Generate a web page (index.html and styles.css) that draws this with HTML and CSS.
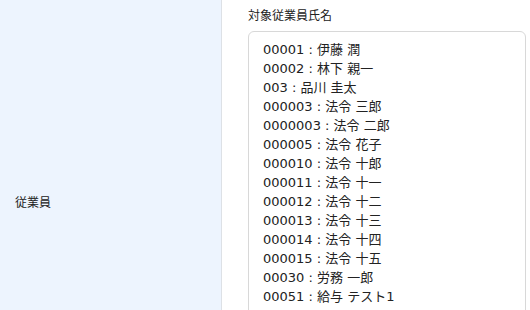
FILE: index.html
```html
<!DOCTYPE html>
<html lang="ja">
<head>
  <meta charset="UTF-8" />
  <title>従業員</title>
  <link rel="stylesheet" href="styles.css">
</head>
<body>
  <div class="form-row">
    <div class="row-head">従業員</div>
    <div class="row-body">
      <div class="field-label">対象従業員氏名</div>
      <ul class="emp-list">
        <li>00001 : 伊藤 潤</li>
        <li>00002 : 林下 親一</li>
        <li>003 : 品川 圭太</li>
        <li>000003 : 法令 三郎</li>
        <li>0000003 : 法令 二郎</li>
        <li>000005 : 法令 花子</li>
        <li>000010 : 法令 十郎</li>
        <li>000011 : 法令 十一</li>
        <li>000012 : 法令 十二</li>
        <li>000013 : 法令 十三</li>
        <li>000014 : 法令 十四</li>
        <li>000015 : 法令 十五</li>
        <li>00030 : 労務 一郎</li>
        <li>00051 : 給与 テスト1</li>
      </ul>
    </div>
  </div>
</body>
</html>
```

FILE: styles.css
```css
* {
  box-sizing: border-box;
  margin: 0;
  padding: 0;
}
html, body {
  height: 100%;
  overflow: hidden;
}
body {
  font-family: "DejaVu Sans", "Noto Sans CJK JP", sans-serif;
  font-size: 13px;
  color: #222;
  background: #fff;
}
.form-row {
  display: flex;
  height: 402px;
}
.row-head {
  width: 222px;
  flex-shrink: 0;
  background: #edf4fe;
  border-right: 1px solid #dde1e6;
  padding-left: 15px;
  display: flex;
  align-items: center;
  font-size: 12px;
}
.row-body {
  flex: 1;
  padding: 8px 4px 0 26px;
}
.field-label {
  font-size: 12px;
  line-height: 17px;
  margin-bottom: 6px;
}
.emp-list {
  list-style: none;
  border: 1px solid #d8d8d8;
  border-radius: 6px;
  padding: 8px 14px 40px;
  line-height: 19px;
}
```
